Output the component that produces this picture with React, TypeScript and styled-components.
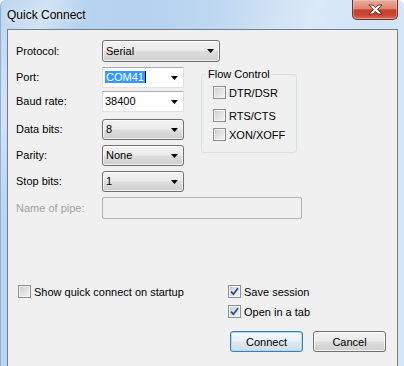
import * as React from 'react';
import styled, {createGlobalStyle} from 'styled-components';

const GlobalStyle = createGlobalStyle`
  html, body {
    margin: 0;
    padding: 0;
  }

  body {
    width: 404px;
    height: 366px;
    overflow: hidden;
    font-family: "Liberation Sans", Arial, sans-serif;
    font-size: 11px;
    color: #000;
  }
`;

const StyledWindow = styled.div`
  width: 404px;
  height: 366px;
  box-sizing: border-box;
  padding: 0 6px 0 7px;
  display: flex;
  flex-direction: column;
  overflow: hidden;
  border-radius: 6px 6px 0 0;
  background:
    linear-gradient(112deg,
      rgba(255, 255, 255, 0) 0%,
      rgba(255, 255, 255, 0.35) 9%,
      rgba(255, 255, 255, 0) 16%,
      rgba(255, 255, 255, 0) 42%,
      rgba(255, 255, 255, 0.3) 58%,
      rgba(255, 255, 255, 0) 70%),
    linear-gradient(to right, #bcd5ef 0%, #b5d2f0 35%, #c6dcf3 65%, #d4e6f7 100%);
  box-shadow: inset 1px 0 0 #8fb0d4;
`;

const StyledTitleBar = styled.div`
  height: 29px;
  flex-shrink: 0;
  display: flex;
  justify-content: space-between;
  align-items: flex-start;
`;

const StyledTitle = styled.div`
  margin-top: 8px;
  font-size: 12px;
  line-height: 14px;
  color: #000;
  text-shadow: 0 0 6px rgba(255, 255, 255, 0.9);
`;

const StyledClose = styled.div`
  width: 46px;
  height: 20px;
  box-sizing: border-box;
  border: 1px solid #6e3129;
  border-top: none;
  border-radius: 0 0 5px 5px;
  background: linear-gradient(#e9ab9c 0%, #dc8776 45%, #c7412d 52%, #c8452f 78%, #d8715c 100%);
  box-shadow: inset 0 0 0 1px rgba(255, 210, 200, 0.45);
  display: flex;
  align-items: center;
  justify-content: center;
`;

const StyledClient = styled.div`
  flex: 1;
  background: #f0f0f0;
  border: 1px solid #6f7f91;
  border-bottom: none;
  padding: 10px 11px 0 8px;
  display: flex;
  flex-direction: column;
`;

const StyledForm = styled.div`
  display: grid;
  grid-template-columns: 86px 82px 17px 96px 1fr;
  grid-template-rows: 22px 26px 24px 28px 26px 26px 27px;
`;

const StyledLabel = styled.div<{$row: number; $disabled?: boolean}>`
  grid-column: 1;
  grid-row: ${p => p.$row};
  align-self: end;
  height: 21px;
  line-height: 21px;
  color: ${p => (p.$disabled ? '#a0a0a0' : '#000')};
  white-space: nowrap;
`;

const StyledCombo = styled.div<{$row: number; $width: number; $height: number}>`
  grid-column: 2 / span 4;
  grid-row: ${p => p.$row};
  align-self: end;
  width: ${p => p.$width}px;
  height: ${p => p.$height}px;
  box-sizing: border-box;
  display: flex;
  align-items: center;
  padding-left: 3px;
  white-space: nowrap;

  &.list {
    border: 1px solid #707070;
    border-radius: 3px;
    background: linear-gradient(#f2f2f2 0%, #ebebeb 48%, #dddddd 52%, #cfcfcf 100%);
    box-shadow: inset 0 0 0 1px rgba(255, 255, 255, 0.7);
  }

  &.edit {
    border: 1px solid #e2e3ea;
    border-top-color: #abadb3;
    border-left-color: #dbdfe6;
    border-right-color: #dbdfe6;
    background: #fff;
    padding-left: 2px;
  }

  &.off {
    border: 1px solid #adb2b5;
    border-radius: 2px;
    background: #f0f0f0;
  }
`;

const StyledValue = styled.span`
  flex: 1;
  line-height: 13px;
`;

const StyledSelected = styled.span`
  background: #3399ff;
  color: #fff;
  padding: 0 1px;
  border-right: 1px solid #000;
`;

const StyledArrow = styled.span`
  width: 17px;
  display: flex;
  justify-content: center;
  align-items: center;
`;

const StyledGroup = styled.fieldset`
  grid-column: 4;
  grid-row: 2 / 6;
  margin: 6px 0 13px 0;
  padding: 5px 0 0 11px;
  min-width: 0;
  border: 1px solid #d5dfe5;
  border-radius: 3px;
  display: flex;
  flex-direction: column;
`;

const StyledLegend = styled.legend`
  margin-left: -7px;
  padding: 0 2px;
  line-height: 13px;
`;

const StyledCheck = styled.label<{$mt?: number}>`
  display: flex;
  align-items: center;
  height: 13px;
  margin-top: ${p => p.$mt || 0}px;
  white-space: nowrap;
`;

const StyledBox = styled.span`
  width: 13px;
  height: 13px;
  box-sizing: border-box;
  flex-shrink: 0;
  margin-right: 3px;
  border: 1px solid #8e8f8f;
  background: linear-gradient(135deg, #c9cbcf 0%, #e2e3e5 55%, #f5f5f5 100%);
  box-shadow: inset 0 0 0 1px #f4f4f4;
  display: flex;
  align-items: center;
  justify-content: center;
`;

const StyledBottom = styled.div`
  margin-top: 66px;
  display: grid;
  grid-template-columns: 210px 1fr;
  padding-left: 2px;
`;

const StyledButtons = styled.div`
  margin-top: 13px;
  display: flex;
  justify-content: flex-end;
  gap: 10px;
`;

const StyledButton = styled.div`
  width: 73px;
  height: 21px;
  box-sizing: border-box;
  border: 1px solid #707070;
  border-radius: 3px;
  background: linear-gradient(#f2f2f2 0%, #ebebeb 48%, #dddddd 52%, #cfcfcf 100%);
  box-shadow: inset 0 0 0 1px rgba(255, 255, 255, 0.75);
  display: flex;
  align-items: center;
  justify-content: center;

  &.default {
    border-color: #3c7fb1;
    background: linear-gradient(#f3f8fb 0%, #eaf2f7 48%, #dde8ef 52%, #d2dfe8 100%);
    box-shadow: inset 0 0 0 1px #a6dcf6;
  }
`;

const Arrow = () => (
  <StyledArrow>
    <svg width="7" height="4" viewBox="0 0 7 4">
      <polygon points="0,0 7,0 3.5,4" fill="#000" />
    </svg>
  </StyledArrow>
);

const CloseGlyph = () => (
  <svg width="15" height="11" viewBox="0 0 15 11">
    <path
      d="M1 1 H5 L7.5 3.6 L10 1 H14 L9.6 5.5 L14 10 H10 L7.5 7.4 L5 10 H1 L5.4 5.5 Z"
      fill="#fff"
      stroke="#4a2420"
      strokeWidth="0.9"
      strokeLinejoin="round"
    />
  </svg>
);

const CheckBox: React.FC<{checked?: boolean; label: string; mt?: number}> = ({checked, label, mt}) => (
  <StyledCheck $mt={mt}>
    <StyledBox>
      {checked && (
        <svg width="9" height="9" viewBox="0 0 9 9">
          <path d="M1 4.6 L3.4 7.2 L8 1.2" fill="none" stroke="#2a4a8f" strokeWidth="1.7" />
        </svg>
      )}
    </StyledBox>
    {label}
  </StyledCheck>
);

type ComboKind = 'list' | 'edit' | 'off';

const Combo: React.FC<{row: number; width?: number; height?: number; kind: ComboKind; children?: React.ReactNode}> = ({
  row,
  width = 82,
  height = 21,
  kind,
  children
}) => (
  <StyledCombo $row={row} $width={width} $height={height} className={kind}>
    <StyledValue>{children}</StyledValue>
    {kind !== 'off' && <Arrow />}
  </StyledCombo>
);

export default function App() {
  return (
    <>
      <GlobalStyle />
      <StyledWindow>
        <StyledTitleBar>
          <StyledTitle>Quick Connect</StyledTitle>
          <StyledClose>
            <CloseGlyph />
          </StyledClose>
        </StyledTitleBar>
        <StyledClient>
          <StyledForm>
            <StyledLabel $row={1}>Protocol:</StyledLabel>
            <Combo row={1} width={118} height={22} kind="list">Serial</Combo>

            <StyledLabel $row={2}>Port:</StyledLabel>
            <Combo row={2} kind="edit">
              <StyledSelected>COM41</StyledSelected>
            </Combo>

            <StyledLabel $row={3}>Baud rate:</StyledLabel>
            <Combo row={3} kind="edit">38400</Combo>

            <StyledLabel $row={4}>Data bits:</StyledLabel>
            <Combo row={4} kind="list">8</Combo>

            <StyledLabel $row={5}>Parity:</StyledLabel>
            <Combo row={5} kind="list">None</Combo>

            <StyledLabel $row={6}>Stop bits:</StyledLabel>
            <Combo row={6} kind="list">1</Combo>

            <StyledLabel $row={7} $disabled>Name of pipe:</StyledLabel>
            <Combo row={7} width={200} height={22} kind="off" />

            <StyledGroup>
              <StyledLegend>Flow Control</StyledLegend>
              <CheckBox label="DTR/DSR" />
              <CheckBox label="RTS/CTS" mt={10} />
              <CheckBox label="XON/XOFF" mt={6} />
            </StyledGroup>
          </StyledForm>

          <StyledBottom>
            <CheckBox label="Show quick connect on startup" />
            <CheckBox label="Save session" checked />
            <span />
            <CheckBox label="Open in a tab" checked mt={7} />
          </StyledBottom>

          <StyledButtons>
            <StyledButton className="default">Connect</StyledButton>
            <StyledButton>Cancel</StyledButton>
          </StyledButtons>
        </StyledClient>
      </StyledWindow>
    </>
  );
}
